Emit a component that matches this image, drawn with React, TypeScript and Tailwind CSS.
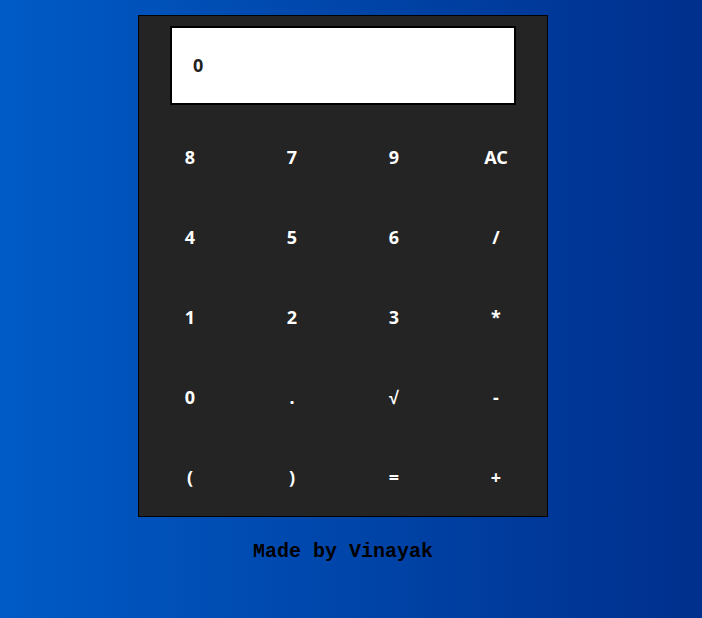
const keys = ["8", "7", "9", "AC", "4", "5", "6", "/", "1", "2", "3", "*", "0", ".", "√", "-", "(", ")", "=", "+"]

export default function App() {
  return (
    <main className="min-h-screen bg-linear-to-r from-[#005bc6] to-[#002f8d] flex flex-col items-center pt-[15px] pr-[16px] font-['Noto_Sans',sans-serif]">
      <div className="w-[410px] border border-black bg-[#242424]">
        <div className="mx-auto mt-[10px] mb-[11px] w-[346px] h-[79px] border-2 border-black bg-white flex items-center pl-[21px] text-[18px] font-bold text-[#222]">
          0
        </div>
        <div className="grid grid-cols-4">
          {keys.map((k) => (
            <button key={k} className="h-20 flex items-center justify-center pt-[2px] text-[18px] font-bold text-white">
              {k}
            </button>
          ))}
        </div>
      </div>
      <p className="mt-[21px] text-[20px] leading-7 font-bold text-black font-['Liberation_Mono',monospace]">Made by Vinayak</p>
    </main>
  )
}
